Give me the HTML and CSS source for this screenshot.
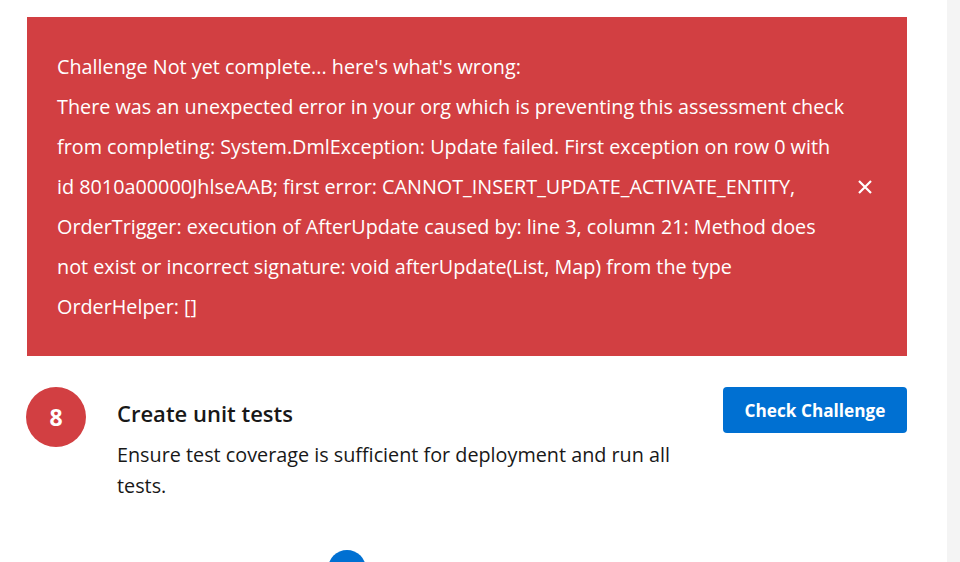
FILE: index.html
```html
<!DOCTYPE html>
<html lang="en">
<head>
<meta charset="UTF-8">
<title>Challenge</title>
<link rel="stylesheet" href="styles.css">
</head>
<body>
<main class="content">
  <div class="error-box">
    <div class="error-text">
      <p>Challenge Not yet complete... here's what's wrong:</p>
      <p>There was an unexpected error in your org which is preventing this assessment check<br>
      from completing: System.DmlException: Update failed. First exception on row 0 with<br>
      id 8010a00000JhlseAAB; first error: CANNOT_INSERT_UPDATE_ACTIVATE_ENTITY,<br>
      OrderTrigger: execution of AfterUpdate caused by: line 3, column 21: Method does<br>
      not exist or incorrect signature: void afterUpdate(List, Map) from the type<br>
      OrderHelper: []</p>
    </div>
    <button class="close-btn" aria-label="Close">
      <svg width="16" height="16" viewBox="0 0 16 16"><path d="M2 2 L14 14 M14 2 L2 14" stroke="#fff" stroke-width="2.2" fill="none"/></svg>
    </button>
  </div>
  <div class="step">
    <div class="step-num">8</div>
    <div class="step-body">
      <h2>Create unit tests</h2>
      <p>Ensure test coverage is sufficient for deployment and run all tests.</p>
    </div>
    <button class="check-btn">Check Challenge</button>
  </div>
  <div class="next-dot-row">
    <div class="next-dot"></div>
  </div>
</main>
<aside class="side"></aside>
</body>
</html>
```
FILE: styles.css
```css
body {
  margin: 0;
  display: flex;
  height: 562px;
  overflow: hidden;
  font-family: 'Open Sans', 'Noto Sans', sans-serif;
  background-color: #fff;
  color: #16325c;
}
.content {
  width: 947px;
  padding: 17px 40px 0 27px;
  box-sizing: border-box;
}
.side {
  flex: 1;
  background-color: #f4f4f4;
}
.error-box {
  display: flex;
  align-items: center;
  background-color: #d23f42;
  color: #fff;
  padding: 30px 34px 29px 30px;
}
.error-text {
  width: 800px;
  white-space: nowrap;
}
.error-text p {
  margin: 0;
  font-size: 19.8px;
  line-height: 40px;
}
.close-btn {
  margin-left: auto;
  background: none;
  border: none;
  padding: 0;
  width: 16px;
  height: 16px;
  cursor: pointer;
}
.step {
  display: flex;
  align-items: flex-start;
  margin-top: 31px;
}
.step-num {
  width: 60px;
  height: 60px;
  border-radius: 50%;
  background-color: #d23f42;
  color: #fff;
  font-weight: 700;
  font-size: 23px;
  display: flex;
  align-items: center;
  justify-content: center;
  margin-left: -1px;
}
.step-body {
  margin-left: 31px;
  width: 575px;
}
.step-body h2 {
  margin: 11px 0 0;
  font-size: 22px;
  font-weight: 600;
  line-height: 30px;
  color: #181818;
}
.step-body p {
  margin: 11px 0 0;
  font-size: 19.8px;
  line-height: 31px;
  color: #181818;
}
.check-btn {
  margin-left: auto;
  width: 184px;
  height: 46px;
  background-color: #0070d2;
  color: #fff;
  border: none;
  border-radius: 4px;
  font-family: inherit;
  font-size: 17.2px;
  font-weight: 700;
  cursor: pointer;
}
.next-dot-row {
  padding-left: 301px;
  margin-top: 49px;
}
.next-dot {
  width: 38px;
  height: 38px;
  border-radius: 50%;
  background-color: #0070d2;
}
```
